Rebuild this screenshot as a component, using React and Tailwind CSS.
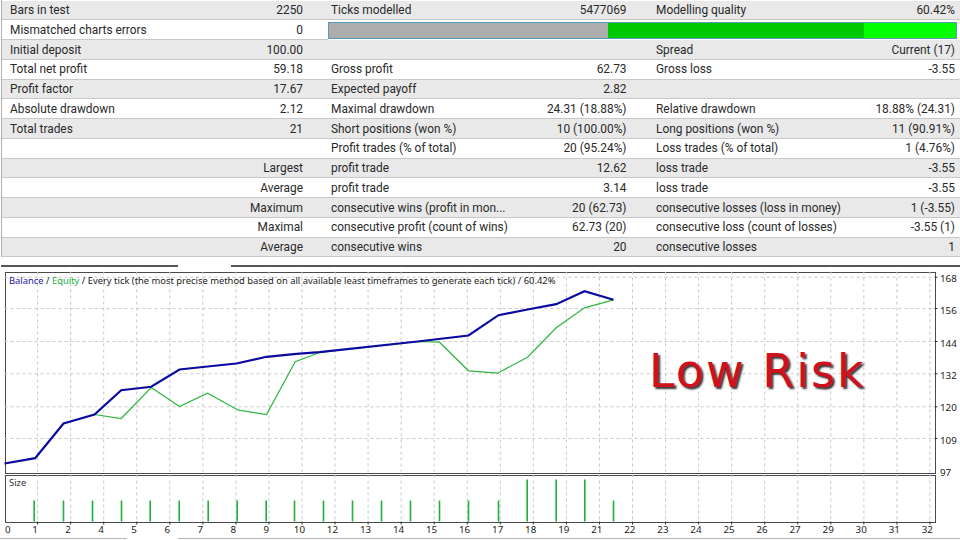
const font = { fontFamily: 'Roboto, "Noto Sans", sans-serif' };
const small = { fontFamily: '"Noto Sans", "DejaVu Sans", sans-serif' };

const rows = [
  ['Bars in test', '2250', 'Ticks modelled', '5477069', 'Modelling quality', '60.42%'],
  null,
  ['Initial deposit', '100.00', '', '', 'Spread', 'Current (17)'],
  ['Total net profit', '59.18', 'Gross profit', '62.73', 'Gross loss', '-3.55'],
  ['Profit factor', '17.67', 'Expected payoff', '2.82', '', ''],
  ['Absolute drawdown', '2.12', 'Maximal drawdown', '24.31 (18.88%)', 'Relative drawdown', '18.88% (24.31)'],
  ['Total trades', '21', 'Short positions (won %)', '10 (100.00%)', 'Long positions (won %)', '11 (90.91%)'],
  ['', '', 'Profit trades (% of total)', '20 (95.24%)', 'Loss trades (% of total)', '1 (4.76%)'],
  ['', 'Largest', 'profit trade', '12.62', 'loss trade', '-3.55'],
  ['', 'Average', 'profit trade', '3.14', 'loss trade', '-3.55'],
  ['', 'Maximum', 'consecutive wins (profit in mon...', '20 (62.73)', 'consecutive losses (loss in money)', '1 (-3.55)'],
  ['', 'Maximal', 'consecutive profit (count of wins)', '62.73 (20)', 'consecutive loss (count of losses)', '-3.55 (1)'],
  ['', 'Average', 'consecutive wins', '20', 'consecutive losses', '1'],
];

const balance = [[0,192],[30.7,186.7],[59,152],[90,143],[116.7,118.7],[146.7,115.3],[175,98],[203,95],[232,92],[262,85.3],[292,82.3],[315,80.7],[413,70],[464,64],[494,43.7],[523,38],[551.7,32.7],[580,19.7],[609,28.3]];
const equity = [[90,143],[116.7,147],[146.7,116],[175,135],[203,121.7],[234,138.7],[262,143],[290.7,90.3],[315,81],[413,70],[435,70.7],[464,99.3],[493,101.7],[523,85.7],[551.7,56.3],[580,36.3],[609,28.3]];
const pts = (a) => a.map((p) => p.join(',')).join(' ');
const vGrid = Array.from({ length: 28 }, (_, i) => 33.1 + i * 33.05);
const hGrid = [5.7, 37, 70, 102.3, 135.3, 167];
const yLabels = ['168', '156', '144', '132', '120', '109', '97'];
const bars = [29.7,59,88,117,145.7,174.7,203.7,232.7,261.7,290,319,348,377,406,435,464,494,609];
const tallBars = [522.7,551.7,580.3];
const xLabels = ['1','2','4','5','6','7','8','9','10','12','13','14','15','16','17','18','19','21','22','23','24','25','26','27','29','30','31','32'];

function Row({ r, i }) {
  const bg = i % 2 === 0 ? 'bg-[#e9e9e9]' : 'bg-white';
  if (!r) {
    return (
      <div className={`flex h-[19.75px] items-center ${bg}`}>
        <div className="flex h-full w-[326px] items-center justify-between border-b border-[#c8c8c8] pl-[8px] pr-[25px]">
          <span>Mismatched charts errors</span>
          <span>0</span>
        </div>
        <div className="flex h-[17px] w-[629px] border border-[#5a9ac0] bg-white">
          <div className="w-[279px] bg-[#adadad]" />
          <div className="w-[256px] bg-[#00c800]" />
          <div className="flex-1 bg-[#00ff00]" />
        </div>
      </div>
    );
  }
  return (
    <div className={`grid h-[19.75px] grid-cols-[301px_28px_295.5px_29.5px_299px] items-center border-b border-[#c8c8c8] ${bg}`}>
      <div className="relative h-full">
        <span className="absolute left-[8px] top-[0.5px] whitespace-nowrap">{r[0]}</span>
        <span className="absolute right-0 top-[0.5px] whitespace-nowrap">{r[1]}</span>
      </div>
      <div />
      <div className="relative h-full">
        <span className="absolute left-0 top-[0.5px] whitespace-nowrap">{r[2]}</span>
        <span className="absolute right-0 top-[0.5px] whitespace-nowrap">{r[3]}</span>
      </div>
      <div />
      <div className="relative h-full">
        <span className="absolute left-0 top-[0.5px] whitespace-nowrap">{r[4]}</span>
        <span className="absolute right-0 top-[0.5px] whitespace-nowrap">{r[5]}</span>
      </div>
    </div>
  );
}

function Grid({ h, horizontal }) {
  return (
    <>
      {vGrid.map((x) => (
        <line key={x} x1={x} y1="0" x2={x} y2={h} stroke="#c8c8c8" strokeWidth="1" strokeDasharray="3 3" />
      ))}
      {horizontal && hGrid.map((y) => (
        <g key={y}>
          <line x1="0" y1={y} x2="930" y2={y} stroke="#c8c8c8" strokeWidth="1" strokeDasharray="3 3" />
          <line x1="930" y1={y} x2="933" y2={y} stroke="#333333" strokeWidth="1" />
        </g>
      ))}
    </>
  );
}

export default function App() {
  return (
    <div className="h-[540px] w-[960px] overflow-hidden bg-white text-[11.9px] leading-[18px] text-[#2a2a2a]" style={font}>
      <div className="ml-[1px] border-l border-[#b0b0b0] pt-[0.5px]">
        {rows.map((r, i) => <Row key={i} r={r} i={i} />)}
      </div>

      <div className="mt-[7.75px] flex h-[2px] pl-[1px]">
        <div className="h-[1.5px] w-[177px] bg-[#555555]" />
        <div className="w-[53px]" />
        <div className="h-[1.5px] flex-1 bg-[#555555]" />
      </div>

      <div className="mt-[5px] flex">
        <div className="ml-[5px] w-[931px] shrink-0">
          <div className="relative h-[202px] border-[1.5px] border-[#4a4a4a]">
            <svg className="block h-[199px] w-[928px] overflow-visible" viewBox="1.5 1.5 928 199">
              <Grid h={200} horizontal />
              <polyline points={pts(equity)} fill="none" stroke="#2fb53f" strokeWidth="1.2" />
              <polyline points={pts(balance)} fill="none" stroke="#0a0aa0" strokeWidth="2.2" />
            </svg>
            <div className="absolute left-[3px] top-[1px] whitespace-nowrap text-[9.4px] leading-[14px] text-[#222222]" style={small}>
              <span className="text-[#2020a8]">Balance</span>
              <span> / </span>
              <span className="text-[#20b040]">Equity</span>
              <span> / Every tick (the most precise method based on all available least timeframes to generate each tick) / 60.42%</span>
            </div>
            <div
              className="absolute left-[643px] top-[68px] whitespace-nowrap text-[46px] leading-[60px] tracking-[2px] text-[#d0101c]"
              style={{ fontFamily: '"DejaVu Sans", sans-serif', textShadow: '2px 2px 2px #333333' }}
            >
              Low Risk
            </div>
          </div>
          <div className="relative mt-[1px] h-[48px] border-[1.5px] border-[#4a4a4a]">
            <svg className="block h-[45px] w-[928px] overflow-visible" viewBox="1.5 1.5 928 45">
              <Grid h={47} />
              {vGrid.map((x) => <line key={x} x1={x} y1="47" x2={x} y2="50" stroke="#333333" strokeWidth="1" />)}
              {bars.map((x) => <line key={x} x1={x} y1="26" x2={x} y2="47" stroke="#22b03a" strokeWidth="1.6" />)}
              {tallBars.map((x) => <line key={x} x1={x} y1="5" x2={x} y2="47" stroke="#22b03a" strokeWidth="1.6" />)}
            </svg>
            <div className="absolute left-[3px] top-[1px] text-[9.4px] leading-[12px] text-[#333333]" style={small}>Size</div>
          </div>
        </div>
        <div className="flex h-[207px] flex-col justify-between pl-[4px] pt-[1px] text-[9.8px] leading-[12px] text-[#222222]" style={small}>
          {yLabels.map((l) => <span key={l}>{l}</span>)}
        </div>
      </div>

      <div className="flex h-[15px] text-[9.8px] leading-[14px] text-[#222222]" style={small}>
        <span className="w-[18.5px] pl-[5px]">0</span>
        {xLabels.map((l) => <span key={l} className="w-[33.05px] shrink-0 text-center">{l}</span>)}
      </div>
      <div className="flex">
        <div className="h-[1px] w-[127px] bg-[#b4b4b4]" />
        <div className="w-[51px]" />
        <div className="h-[1px] flex-1 bg-[#b4b4b4]" />
      </div>
    </div>
  );
}
